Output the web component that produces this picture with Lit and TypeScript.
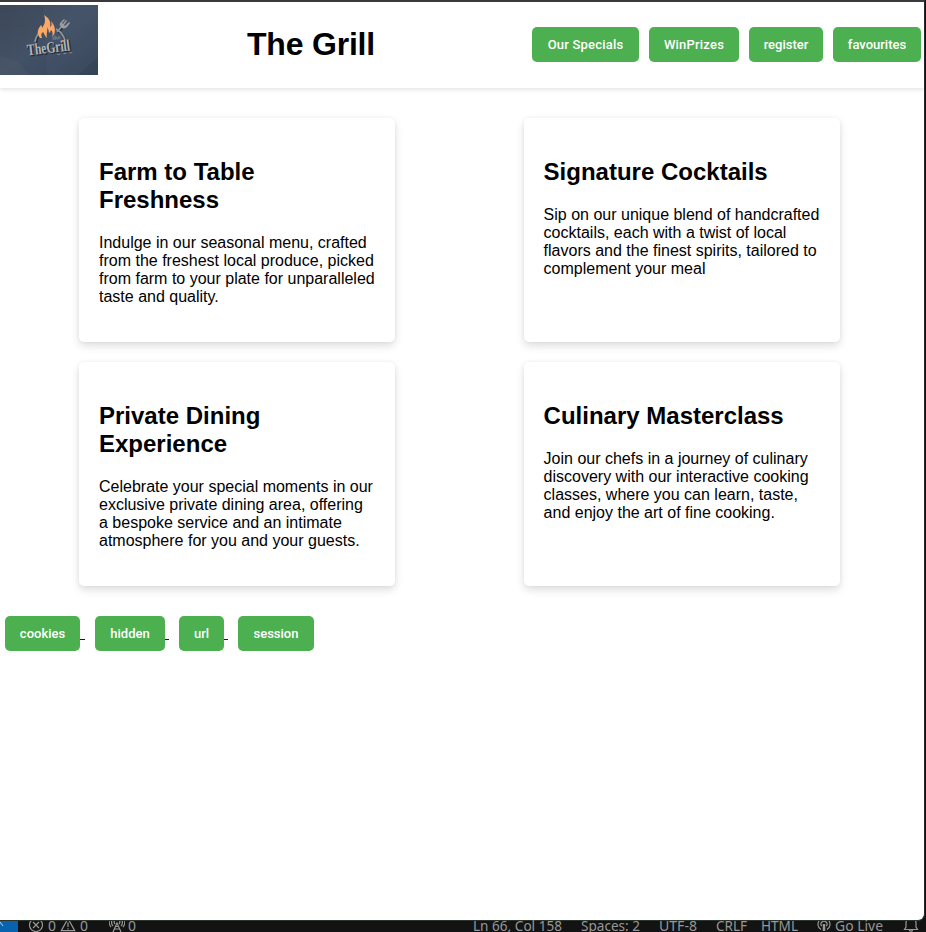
import { LitElement, html, css, svg } from "lit";
import { customElement, property } from "lit/decorators.js";

@customElement("grill-logo")
class GrillLogo extends LitElement {
  static styles = css`
    :host { display: block; width: 98px; height: 70px; }
    svg { display: block; }
    .brand { font: bold 16px "Liberation Serif", serif; }
    .small { font: bold 6px "Liberation Serif", serif; }
  `;
  render() {
    return html`<svg width="98" height="70" viewBox="0 0 98 70">
      <defs>
        <linearGradient id="wall" x1="0" y1="0" x2="1" y2="1">
          <stop offset="0" stop-color="#3c4858" />
          <stop offset=".5" stop-color="#435166" />
          <stop offset="1" stop-color="#334356" />
        </linearGradient>
      </defs>
      <rect width="98" height="70" fill="url(#wall)" />
      <path d="M43 0L47 70H78L98 52V0Z" fill="#526075" opacity=".2" />
      <path d="M0 50L18 57L30 70H0Z" fill="#59616b" opacity=".25" />
      <g transform="translate(1 1)" stroke="#252f3c" fill="none" stroke-width="2">
        <path d="M35 37Q36 31 40 27M56 24Q63 28 65 35M57 27L63 20" />
      </g>
      <g stroke="#94979b" fill="none" stroke-width="1.6">
        <path d="M35 37Q36 31 40 27M56 24Q63 28 65 35M57 27L63 20" />
      </g>
      <path d="M60 18L64 14L65 15L62 18L63 19L66 15L67 16L64 20L65 21L69 17L70 18L67 22Q63 25 61 22Q59 20 60 18Z" fill="#9b9da0" />
      <path d="M40 33C36 28 38 24 41 20Q42 21 42 23C45 19 46 15 44 10C50 14 51 17 50 22C52 21 52 18 51 16C55 20 57 28 52 32C53 29 53 27 51 25Q50 28 49 28Q49 25 47 22C48 26 46 28 47 33C44 30 44 28 43 27C41 29 41 30 42 33Z" fill="#fba867" />
      <g transform="rotate(-7 28 48)">
        <text class="brand" x="28.5" y="51.5" fill="#222d3a" stroke="#222d3a" stroke-width=".4" textLength="43" lengthAdjust="spacingAndGlyphs">TheGrill</text>
        <text class="brand" x="27.5" y="50.5" fill="#b5b5b5" textLength="43" lengthAdjust="spacingAndGlyphs">TheGrill</text>
        <text class="small" x="54" y="38" fill="#85898f">the</text>
        <path d="M57 53h3m3 0h3m3 0h3" stroke="#858a90" />
      </g>
      <circle cx="63" cy="36" r="1.1" fill="#ee8d48" />
    </svg>`;
  }
}

@customElement("grill-button")
class GrillButton extends LitElement {
  @property() label = "";
  @property({ type: Number }) width = 80;
  @property({ type: Number }) spacing = 0;
  static styles = css`
    :host { display: block; flex: none; }
    button {
      display: block; height: 35px; padding: 0; border: 0; border-radius: 5px;
      background: #4caf50; color: #fff; font: 500 13px Roboto, sans-serif;
      white-space: nowrap;
    }
  `;
  render() {
    return html`<button style="width:${this.width}px;letter-spacing:${this.spacing}px">${this.label}</button>`;
  }
}

const nav: [string, number, number][] = [["Our Specials", 107, 0.2], ["WinPrizes", 90, 0.2], ["register", 74, 0], ["favourites", 88, 0]];
const links: [string, number, number][] = [["cookies", 75, 5], ["hidden", 70, 4], ["url", 45, 4], ["session", 76, 0]];
const cards: [string[], string[]][] = [
  [["Farm to Table", "Freshness"], ["Indulge in our seasonal menu, crafted", "from the freshest local produce, picked", "from farm to your plate for unparalleled", "taste and quality."]],
  [["Signature Cocktails"], ["Sip on our unique blend of handcrafted", "cocktails, each with a twist of local", "flavors and the finest spirits, tailored to", "complement your meal"]],
  [["Private Dining", "Experience"], ["Celebrate your special moments in our", "exclusive private dining area, offering", "a bespoke service and an intimate", "atmosphere for you and your guests."]],
  [["Culinary Masterclass"], ["Join our chefs in a journey of culinary", "discovery with our interactive cooking", "classes, where you can learn, taste,", "and enjoy the art of fine cooking."]],
];

const icons = {
  error: svg`<circle cx="8" cy="8" r="6.5"/><path d="M5 5l6 6m0-6l-6 6"/>`,
  warning: svg`<path d="M8 1.5L1.3 13.7h13.4ZM8 5.5v4.5m0 1.2v1.3"/>`,
  tower: svg`<path d="M4 15L8 6l4 9M5.5 12h5M6.5 9.5h3M4 9a5 5 0 0 1 0-7M12 9a5 5 0 0 0 0-7M6 7a3 3 0 0 1 0-4M10 7a3 3 0 0 0 0-4M2 10a7 7 0 0 1 0-9M14 10a7 7 0 0 0 0-9"/>`,
  live: svg`<path d="M5 12.5a6 6 0 1 1 6 0M5.8 9.2a3 3 0 1 1 4.4 0"/><path d="M8 7v7" stroke-width="2.5"/>`,
  bell: svg`<path d="M1.5 12.5h13L13 10V6a5 5 0 0 0-10 0v4ZM6.3 13a1.8 1.8 0 0 0 3.4 0"/>`,
};

@customElement("app-root")
class AppRoot extends LitElement {
  static styles = css`
    :host { display: block; width: 926px; height: 932px; overflow: hidden; background: #131313; color: #000; font-family: "Liberation Sans", Arial, sans-serif; }
    * { box-sizing: border-box; }
    .window { height: 921px; width: 925px; border-top: 2px solid #3b383e; border-right: 1px solid #28282b; border-bottom: 1px solid #29352b; border-radius: 0 0 7px 0; background: #fff; overflow: hidden; }
    header { height: 86px; display: flex; padding-top: 3px; box-shadow: 0 2px 4px rgba(0,0,0,.1); }
    h1 { margin: 21px 0 0 149px; font-size: 32px; line-height: 37px; width: 285px; letter-spacing: -.2px; white-space: nowrap; }
    nav { display: flex; gap: 10px; padding-top: 22px; }
    main { display: grid; grid-template-columns: 316px 316px; column-gap: 128.6px; row-gap: 20px; padding: 30px 0 0 79px; }
    article { height: 224px; padding: 40px 20px 0; border-radius: 5px; box-shadow: 0 4px 8px rgba(0,0,0,.13), 0 0 4px rgba(0,0,0,.05); white-space: nowrap; }
    h2 { margin: 0 0 20px; font-size: 24px; line-height: 28px; }
    p { margin: 0; font-size: 16px; line-height: 18px; }
    span { display: block; }
    .links { display: flex; margin: 30px 0 0 5px; }
    .underline { height: 1px; margin-top: 23px; background: #0000ee; }
    .space { width: 10px; }
    .status { height: 11px; display: flex; color: #989898; font: 14px/16px "Noto Sans", sans-serif; white-space: nowrap; }
    .remote { width: 18px; height: 11px; background: #0862ad; }
    .remote svg { display: block; }
    .item { flex: none; height: 11px; overflow: visible; }
    .icon { width: 16px; height: 16px; margin-top: -4px; flex: none; fill: none; stroke: #989898; stroke-width: 1.2; clip-path: inset(4px 0 0 0); }
  `;
  icon(name: keyof typeof icons) {
    return html`<svg class="icon" viewBox="0 0 16 16">${icons[name]}</svg>`;
  }
  item(label: string, width: number) {
    return html`<svg class="item" width=${width} height="11"><text x="0" y="10" fill="#989898" textLength=${width - 1} lengthAdjust="spacingAndGlyphs">${label}</text></svg>`;
  }
  gap(width: number) {
    return html`<span style="flex:none;width:${width}px"></span>`;
  }
  render() {
    return html`
      <section class="window">
        <header><grill-logo></grill-logo><h1>The Grill</h1>
          <nav>${nav.map(([label, width, spacing]) => html`<grill-button .label=${label} .width=${width} .spacing=${spacing}></grill-button>`)}</nav>
        </header>
        <main>${cards.map(([title, text]) => html`<article><h2>${title.map(t => html`<span>${t}</span>`)}</h2><p>${text.map(t => html`<span>${t}</span>`)}</p></article>`)}</main>
        <div class="links">${links.map(([label, width, line]) => html`<grill-button .label=${label} .width=${width}></grill-button>${line ? html`<span class="underline" style="width:${line}px"></span><span class="space"></span>` : ""}`)}</div>
      </section>
      <footer class="status">
        <div class="remote"><svg width="18" height="11"><path d="M-2 6L0 1L3 5" stroke="#c0d9ec" fill="none"/></svg></div>
        ${this.gap(10)}${this.icon("error")}${this.gap(4)}${this.item("0", 9)}${this.gap(3)}${this.icon("warning")}${this.gap(4)}${this.item("0", 9)}
        ${this.gap(20)}${this.icon("tower")}${this.gap(3)}${this.item("0", 9)}
        ${this.gap(336)}${this.item("Ln 66, Col 158", 90)}${this.gap(18)}${this.item("Spaces: 2", 60)}${this.gap(18)}${this.item("UTF-8", 39)}${this.gap(18)}${this.item("CRLF", 32)}${this.gap(13)}${this.item("HTML", 38)}${this.gap(17)}${this.icon("live")}${this.gap(3)}${this.item("Go Live", 49)}${this.gap(19)}${this.icon("bell")}
      </footer>
    `;
  }
}
